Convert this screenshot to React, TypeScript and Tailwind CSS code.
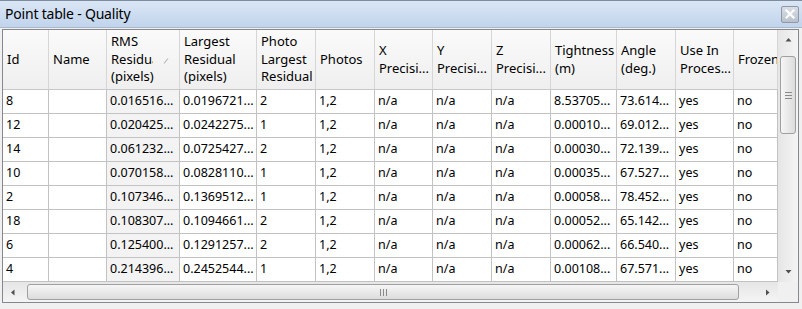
const cols = [
  { w: 'w-[46px]', head: ['Id'] },
  { w: 'w-[58px]', head: ['Name'] },
  { w: 'w-[73px]', head: ['RMS', 'Residual', '(pixels)'], sorted: true },
  { w: 'w-[77px]', head: ['Largest', 'Residual', '(pixels)'] },
  { w: 'w-[59px]', head: ['Photo', 'Largest', 'Residual'] },
  { w: 'w-[59px]', head: ['Photos'] },
  { w: 'w-[58px]', head: ['X', 'Precisi...'] },
  { w: 'w-[59px]', head: ['Y', 'Precisi...'] },
  { w: 'w-[59px]', head: ['Z', 'Precisi...'] },
  { w: 'w-[66px]', head: ['Tightness', '(m)'] },
  { w: 'w-[59px]', head: ['Angle', '(deg.)'] },
  { w: 'w-[58px]', head: ['Use In', 'Proces...'] },
  { w: 'w-[44px]', head: ['Frozen'] },
];

const rows = [
  ['8', '', '0.016516...', '0.0196721...', '2', '1,2', 'n/a', 'n/a', 'n/a', '8.53705...', '73.614...', 'yes', 'no'],
  ['12', '', '0.020425...', '0.0242275...', '1', '1,2', 'n/a', 'n/a', 'n/a', '0.00010...', '69.012...', 'yes', 'no'],
  ['14', '', '0.061232...', '0.0725427...', '2', '1,2', 'n/a', 'n/a', 'n/a', '0.00030...', '72.139...', 'yes', 'no'],
  ['10', '', '0.070158...', '0.0828110...', '1', '1,2', 'n/a', 'n/a', 'n/a', '0.00035...', '67.527...', 'yes', 'no'],
  ['2', '', '0.107346...', '0.1369512...', '1', '1,2', 'n/a', 'n/a', 'n/a', '0.00058...', '78.452...', 'yes', 'no'],
  ['18', '', '0.108307...', '0.1094661...', '2', '1,2', 'n/a', 'n/a', 'n/a', '0.00052...', '65.142...', 'yes', 'no'],
  ['6', '', '0.125400...', '0.1291257...', '2', '1,2', 'n/a', 'n/a', 'n/a', '0.00062...', '66.540...', 'yes', 'no'],
  ['4', '', '0.214396...', '0.2452544...', '1', '1,2', 'n/a', 'n/a', 'n/a', '0.00108...', '67.571...', 'yes', 'no'],
];

function Arrow({ dir }: { dir: 'up' | 'down' | 'left' | 'right' }) {
  const pts = {
    up: '0.5,4.5 3.5,1 6.5,4.5',
    down: '0.5,1 3.5,4.5 6.5,1',
    left: '4.5,0.5 1,3.5 4.5,6.5',
    right: '1,0.5 4.5,3.5 1,6.5',
  }[dir];
  const vert = dir === 'up' || dir === 'down';
  return (
    <svg width={vert ? 7 : 6} height={vert ? 6 : 7} viewBox={vert ? '0 0 7 6' : '0 0 6 7'}>
      <polygon points={pts} fill="#505050" />
    </svg>
  );
}

function VScrollbar() {
  return (
    <div className="w-[20px] h-[252px] flex flex-col bg-gradient-to-r from-[#e6e6e6] to-[#f4f4f4]">
      <div className="h-[20px] flex items-center justify-center">
        <Arrow dir="up" />
      </div>
      <div className="mt-[6px] mx-[2px] h-[78px] rounded-[3px] border border-[#a0a0a0] bg-gradient-to-r from-[#f6f6f6] to-[#dcdcdc] flex flex-col items-center justify-center gap-[2px]">
        <div className="w-[7px] h-px bg-[#8a8a8a]" />
        <div className="w-[7px] h-px bg-[#8a8a8a]" />
        <div className="w-[7px] h-px bg-[#8a8a8a]" />
      </div>
      <div className="flex-1" />
      <div className="h-[20px] flex items-center justify-center">
        <Arrow dir="down" />
      </div>
    </div>
  );
}

function HScrollbar() {
  return (
    <div className="w-[775px] h-[20px] flex items-center bg-gradient-to-b from-[#e6e6e6] to-[#f4f4f4]">
      <div className="w-[20px] h-[20px] flex items-center justify-center">
        <Arrow dir="left" />
      </div>
      <div className="ml-[4px] w-[712px] h-[16px] rounded-[3px] border border-[#a0a0a0] bg-gradient-to-b from-[#f6f6f6] to-[#dcdcdc] flex items-center justify-center gap-[2px]">
        <div className="w-px h-[7px] bg-[#8a8a8a]" />
        <div className="w-px h-[7px] bg-[#8a8a8a]" />
        <div className="w-px h-[7px] bg-[#8a8a8a]" />
      </div>
      <div className="flex-1" />
      <div className="w-[20px] h-[20px] flex items-center justify-center">
        <Arrow dir="right" />
      </div>
    </div>
  );
}

export default function App() {
  return (
    <div className="w-[802px] h-[309px] bg-[#f0f0f0] text-black overflow-hidden font-['Noto_Sans',sans-serif]">
      {/* Title bar */}
      <div className="h-[28px] flex items-center justify-between pl-[5px] pr-[3px] border-t border-[#7d8c9e] border-b border-b-[#a9b9cc] bg-gradient-to-b from-[#dae6f5] to-[#c1d4ec]">
        <span className="text-[14px] tracking-[-0.2px] leading-none">Point table - Quality</span>
        <div className="w-[18px] h-[17px] rounded-[2px] border border-[#8f99a6] bg-gradient-to-b from-[#d9dfe7] to-[#b8c1cc] flex items-center justify-center">
          <svg width="10" height="10" viewBox="0 0 10 10">
            <path d="M1.5 1.5 L8.5 8.5 M8.5 1.5 L1.5 8.5" stroke="#ffffff" strokeWidth="2.2" strokeLinecap="square" />
          </svg>
        </div>
      </div>

      {/* Table frame */}
      <div className="mt-[1px] ml-[2px] w-[797px] border border-[#85898f]">
        <div className="flex">
          <div className="w-[775px] overflow-hidden">
            {/* Header */}
            <div className="flex h-[60px] border-b border-[#c8c8c8] bg-gradient-to-b from-[#fafafa] to-[#efefef] text-[13px] leading-[17.5px]">
              {cols.map((c, i) => (
                <div
                  key={i}
                  className={`${c.w} shrink-0 h-full border-r border-[#d6d6d6] flex items-center pl-[4px] overflow-hidden whitespace-nowrap relative`}
                >
                  <div className="flex flex-col">
                    {c.head.map((line, j) =>
                      c.sorted && line === 'Residual' ? (
                        <span key={j} className="w-[42px] overflow-hidden">{line}</span>
                      ) : (
                        <span key={j}>{line}</span>
                      )
                    )}
                  </div>
                  {c.sorted && (
                    <svg className="absolute left-[56px] top-[28px]" width="6" height="6" viewBox="0 0 6 6">
                      <path d="M1 5.5 L5 0.5" stroke="#b8b8b8" strokeWidth="1.2" />
                    </svg>
                  )}
                </div>
              ))}
            </div>
            {/* Rows */}
            {rows.map((r, i) => (
              <div key={i} className="flex h-[24px] text-[12.5px]">
                {r.map((v, j) => (
                  <div
                    key={j}
                    className={`${cols[j].w} shrink-0 h-full border-r border-b border-[#c2c2c2] flex items-center pl-[3px] overflow-hidden whitespace-nowrap ${cols[j].sorted ? 'bg-[#f3f3f3]' : 'bg-white'}`}
                  >
                    {v}
                  </div>
                ))}
              </div>
            ))}
          </div>
          <VScrollbar />
        </div>
        <div className="flex">
          <HScrollbar />
          <div className="w-[20px] h-[20px] bg-[#f0f0f0]" />
        </div>
      </div>
    </div>
  );
}
